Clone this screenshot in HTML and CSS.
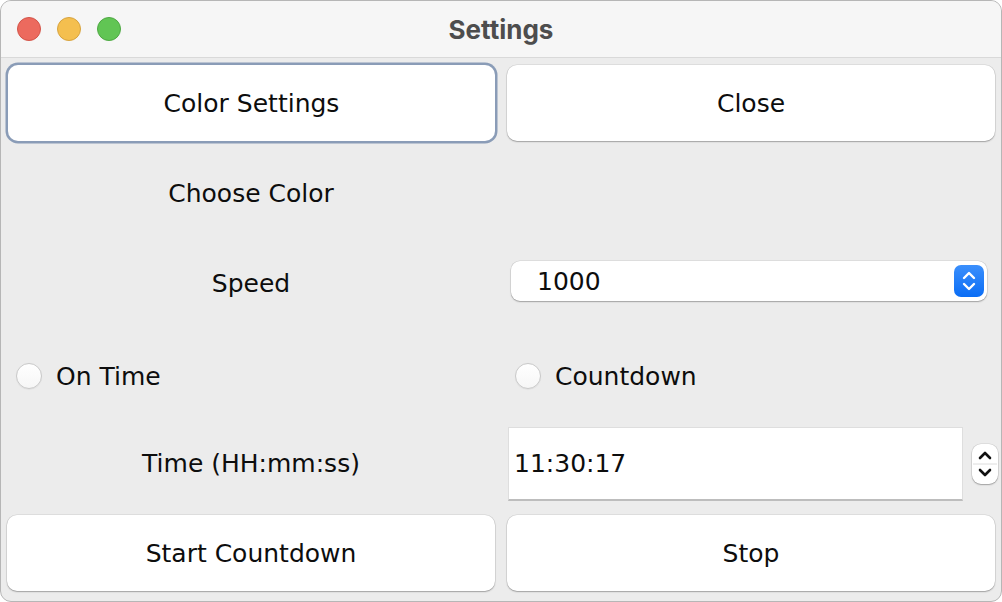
FILE: index.html
```html
<!DOCTYPE html>
<html>
<head>
<meta charset="utf-8">
<title>Settings</title>
<link rel="stylesheet" href="styles.css">
</head>
<body>
<div class="window">
  <div class="titlebar">
    <div class="lights">
      <span class="light red"></span>
      <span class="light yellow"></span>
      <span class="light green"></span>
    </div>
    <div class="title">Settings</div>
    <div></div>
  </div>
  <div class="content">
    <button class="btn focused">Color Settings</button>
    <button class="btn">Close</button>

    <div class="label">Choose Color</div>
    <div class="empty"></div>

    <div class="label">Speed</div>
    <div class="combo">
      <span class="combo-value">1000</span>
      <span class="stepper">
        <svg width="30" height="32" viewBox="0 0 30 32">
          <path d="M10 13 L15 8 L20 13" fill="none" stroke="#fff" stroke-width="2.4" stroke-linecap="round" stroke-linejoin="round"/>
          <path d="M10 19 L15 24 L20 19" fill="none" stroke="#fff" stroke-width="2.4" stroke-linecap="round" stroke-linejoin="round"/>
        </svg>
      </span>
    </div>

    <label class="radio left"><span class="circle"></span>On Time</label>
    <label class="radio right"><span class="circle"></span>Countdown</label>

    <div class="label">Time (HH:mm:ss)</div>
    <div class="time-cell">
      <div class="field">11:30:17</div>
      <div class="spinner">
        <svg width="26" height="40" viewBox="0 0 26 40">
          <path d="M8 14 L13 9 L18 14" fill="none" stroke="#111" stroke-width="2.6" stroke-linecap="round" stroke-linejoin="round"/>
          <line x1="1" y1="20" x2="25" y2="20" stroke="#dcdcdc" stroke-width="1"/>
          <path d="M8 26 L13 31 L18 26" fill="none" stroke="#111" stroke-width="2.6" stroke-linecap="round" stroke-linejoin="round"/>
        </svg>
      </div>
    </div>

    <button class="btn bottom">Start Countdown</button>
    <button class="btn bottom">Stop</button>
  </div>
</div>
</body>
</html>
```
FILE: styles.css
```css
html, body {
  margin: 0;
  padding: 0;
  background: #ffffff;
}

.window {
  box-sizing: border-box;
  width: 1002px;
  height: 602px;
  border: 1px solid #b6b6b6;
  border-radius: 11px;
  overflow: hidden;
  background: #ececec;
  display: flex;
  flex-direction: column;
  font-family: "DejaVu Sans", "Liberation Sans", sans-serif;
  color: #0d0d0d;
}

.titlebar {
  height: 56px;
  flex: none;
  background: #f6f6f6;
  border-bottom: 1px solid #d9d9d9;
  display: grid;
  grid-template-columns: 1fr auto 1fr;
  align-items: center;
}

.lights {
  display: flex;
  gap: 16px;
  padding-left: 16px;
}

.light {
  width: 24px;
  height: 24px;
  border-radius: 50%;
  box-sizing: border-box;
}
.red { background: #ec6a5e; border: 1px solid #d35449; }
.yellow { background: #f4bf4f; border: 1px solid #d7a33f; }
.green { background: #61c554; border: 1px solid #4ea843; }

.title {
  font-family: "Inter", "Roboto", sans-serif;
  font-weight: 700;
  font-size: 26px;
  color: #4d4d4d;
}

.content {
  display: grid;
  grid-template-columns: 500px 500px;
  grid-template-rows: repeat(6, 90px);
}

.btn {
  align-self: start;
  margin: 7px 6px 0 6px;
  height: 76px;
  background: #fff;
  border: none;
  border-radius: 10px;
  box-shadow: 0 0 0 0.5px rgba(0,0,0,0.12), 0 1px 1.5px rgba(0,0,0,0.28);
  font-family: "DejaVu Sans", "Liberation Sans", sans-serif;
  font-size: 25px;
  color: #0d0d0d;
  padding: 0;
}

.btn.focused {
  box-shadow: 0 0 0 2.5px #8a9cb7;
  margin-left: 7px;
}

.label {
  display: flex;
  align-items: center;
  justify-content: center;
  font-size: 25px;
}

.combo {
  align-self: start;
  margin: 23px 14px 0 10px;
  height: 40px;
  background: #fff;
  border-radius: 9px;
  box-shadow: 0 0 0 0.5px rgba(0,0,0,0.12), 0 1px 1.5px rgba(0,0,0,0.28);
  display: flex;
  align-items: center;
  justify-content: space-between;
  padding: 0 3px 0 26px;
  font-size: 25px;
}

.stepper {
  width: 30px;
  height: 32px;
  border-radius: 7px;
  background: linear-gradient(#3b8ffc, #0a6df5);
  display: flex;
}

.radio {
  display: flex;
  align-items: center;
  gap: 14px;
  padding-top: 6px;
  font-size: 25px;
}
.radio.left { padding-left: 15px; }
.radio.right { padding-left: 14px; }

.circle {
  width: 26px;
  height: 26px;
  box-sizing: border-box;
  border-radius: 50%;
  border: 1px solid #c9c9c9;
  background: linear-gradient(#ffffff, #f6f6f6);
  box-shadow: 0 0.5px 1px rgba(0,0,0,0.08);
}

.time-cell {
  display: flex;
  align-items: center;
  padding: 0 3px 0 7px;
  gap: 9px;
}

.field {
  align-self: start;
  margin-top: 9px;
  flex: 1;
  height: 74px;
  box-sizing: border-box;
  background: #fff;
  border: 1px solid #dedede;
  border-bottom: 2px solid #bdbdbd;
  display: flex;
  align-items: center;
  padding-left: 5px;
  font-size: 25px;
}

.spinner {
  width: 26px;
  height: 40px;
  margin-top: 2px;
  border-radius: 9px;
  background: #fff;
  box-shadow: 0 0 0 0.5px rgba(0,0,0,0.12), 0 1px 1.5px rgba(0,0,0,0.28);
  display: flex;
}
```
